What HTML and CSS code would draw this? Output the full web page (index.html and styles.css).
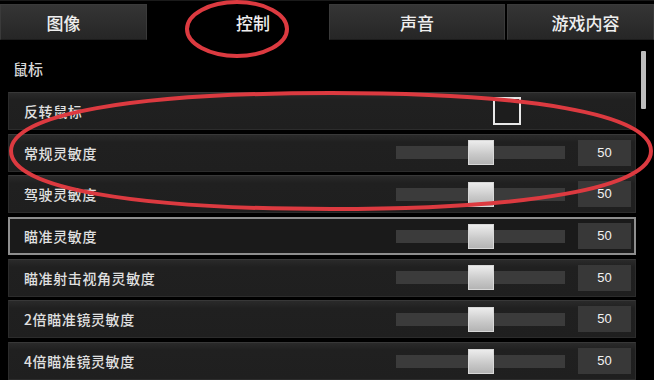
FILE: index.html
```html
<!DOCTYPE html>
<html lang="zh">
<head>
 <meta charset="UTF-8">
 <title>设置</title>
 <link rel="stylesheet" href="styles.css">
</head>
<body>
<div class="screen">
 <div class="tabs">
  <div class="tab">图像</div>
  <div class="tab active">控制</div>
  <div class="tab">声音</div>
  <div class="tab">游戏内容</div>
 </div>

 <div class="panel">
  <div class="section-title">鼠标</div>
  <div class="scroll_thumb"></div>
  <ul class="list">
   <li class="row">
    <span class="label">反转鼠标</span>
    <span class="checkbox"></span>
   </li>
   <li class="row">
    <span class="label">常规灵敏度</span>
    <span class="track"><span class="thumb"></span></span>
    <span class="value">50</span>
   </li>
   <li class="row">
    <span class="label">驾驶灵敏度</span>
    <span class="track"><span class="thumb"></span></span>
    <span class="value">50</span>
   </li>
   <li class="row selected">
    <span class="label">瞄准灵敏度</span>
    <span class="track"><span class="thumb"></span></span>
    <span class="value">50</span>
   </li>
   <li class="row">
    <span class="label">瞄准射击视角灵敏度</span>
    <span class="track"><span class="thumb"></span></span>
    <span class="value">50</span>
   </li>
   <li class="row">
    <span class="label">2倍瞄准镜灵敏度</span>
    <span class="track"><span class="thumb"></span></span>
    <span class="value">50</span>
   </li>
   <li class="row">
    <span class="label">4倍瞄准镜灵敏度</span>
    <span class="track"><span class="thumb"></span></span>
    <span class="value">50</span>
   </li>
  </ul>
 </div>

 <!-- red marker circles drawn over the screenshot -->
 <svg class="marks" width="654" height="380" viewBox="0 0 654 380">
  <ellipse cx="237" cy="29" rx="50" ry="27" />
  <path d="M 11 151 C 11 114, 133 93, 331 93 C 529 93, 651 114, 651 151 C 651 188, 529 209, 331 209 C 133 209, 11 188, 11 151 Z" />
 </svg>
</div>
</body>
</html>
```

FILE: styles.css
```css
html, body {
 margin: 0;
 padding: 0;
 background: #000;
 }
.screen {
 position: relative;
 width: 654px;
 height: 380px;
 overflow: hidden;
 font-family: "Noto Sans CJK SC", "Noto Sans", sans-serif;
 color: #e2e2e2;
 }
.tabs {
 display: flex;
 gap: 2px;
 padding-top: 3px;
 height: 40px;
 border-top: 1px solid #1a1a1a;
 box-sizing: border-box;
 background: #000;
 }
.tab {
 flex: 148px 0 0;
 display: flex;
 align-items: center;
 justify-content: center;
 font-size: 17px;
 font-weight: 500;
 color: #eee;
 background: linear-gradient(#353535, #262626);
 border: 1px solid #3a3a3a;
 border-bottom-color: #1c1c1c;
 box-sizing: border-box;
 }
.tab:nth-child(1) { flex-basis: 147px; padding-right: 20px; }
.tab:nth-child(2) { flex-basis: 178px; }
.tab:nth-child(3) { flex-basis: 176px; }
.tab:nth-child(4) { flex-basis: 147px; padding-left: 10px; }
.tab.active {
 background: #000;
 border-color: #000;
 padding-left: 30px;
 }
.panel {
 position: relative;
 padding-top: 52px;
 }
.section-title {
 position: absolute;
 top: 18px;
 left: 13px;
 font-size: 15px;
 font-weight: 500;
 color: #d8d8d8;
 }
.scroll_thumb {
 position: absolute;
 top: 11px;
 left: 641px;
 width: 5px;
 height: 58px;
 background: #bdbdbd;
 border-radius: 1px;
 }
.list {
 list-style: none;
 margin: 0;
 padding: 0 18px 0 8px;
 display: flex;
 flex-direction: column;
 gap: 3.7px;
 }
.row {
 height: 38px;
 display: flex;
 align-items: center;
 padding: 0 4px 0 15px;
 background: linear-gradient(#2a2a2a, #202020 20%, #1f1f1f);
 border: 1px solid #2c2c2c;
 border-top-color: #383838;
 box-sizing: border-box;
 }
.row.selected {
 border: 2px solid #8e8e8e;
 background: #1a1a1a;
 padding-left: 14px;
 padding-right: 3px;
 }
.label {
 flex: 1;
 font-size: 14px;
 font-weight: 500;
 color: #e0e0e0;
 letter-spacing: 0.6px;
 }
.checkbox {
 width: 24px;
 height: 24px;
 border: 2px solid #e8e8e8;
 background: #1d1d1d;
 margin-right: 110px;
 }
.track {
 position: relative;
 width: 169px;
 height: 13px;
 background: #3b3b3b;
 margin-right: 13px;
 }
.thumb {
 position: absolute;
 left: 72px;
 top: -6px;
 width: 24px;
 height: 23px;
 background: linear-gradient(#ececec, #c8c8c8 60%, #b4b4b4);
 border: 1px solid #d8d8d8;
 }
.value {
 width: 53px;
 height: 26px;
 line-height: 26px;
 text-align: center;
 background: #383838;
 font-family: "Liberation Sans", Arial, sans-serif;
 font-size: 13px;
 color: #f2f2f2;
 }
.marks {
 position: absolute;
 top: 0;
 left: 0;
 pointer-events: none;
 }
.marks ellipse,
.marks path {
 fill: none;
 stroke: #dc3a40;
 stroke-width: 4;
 }
```
